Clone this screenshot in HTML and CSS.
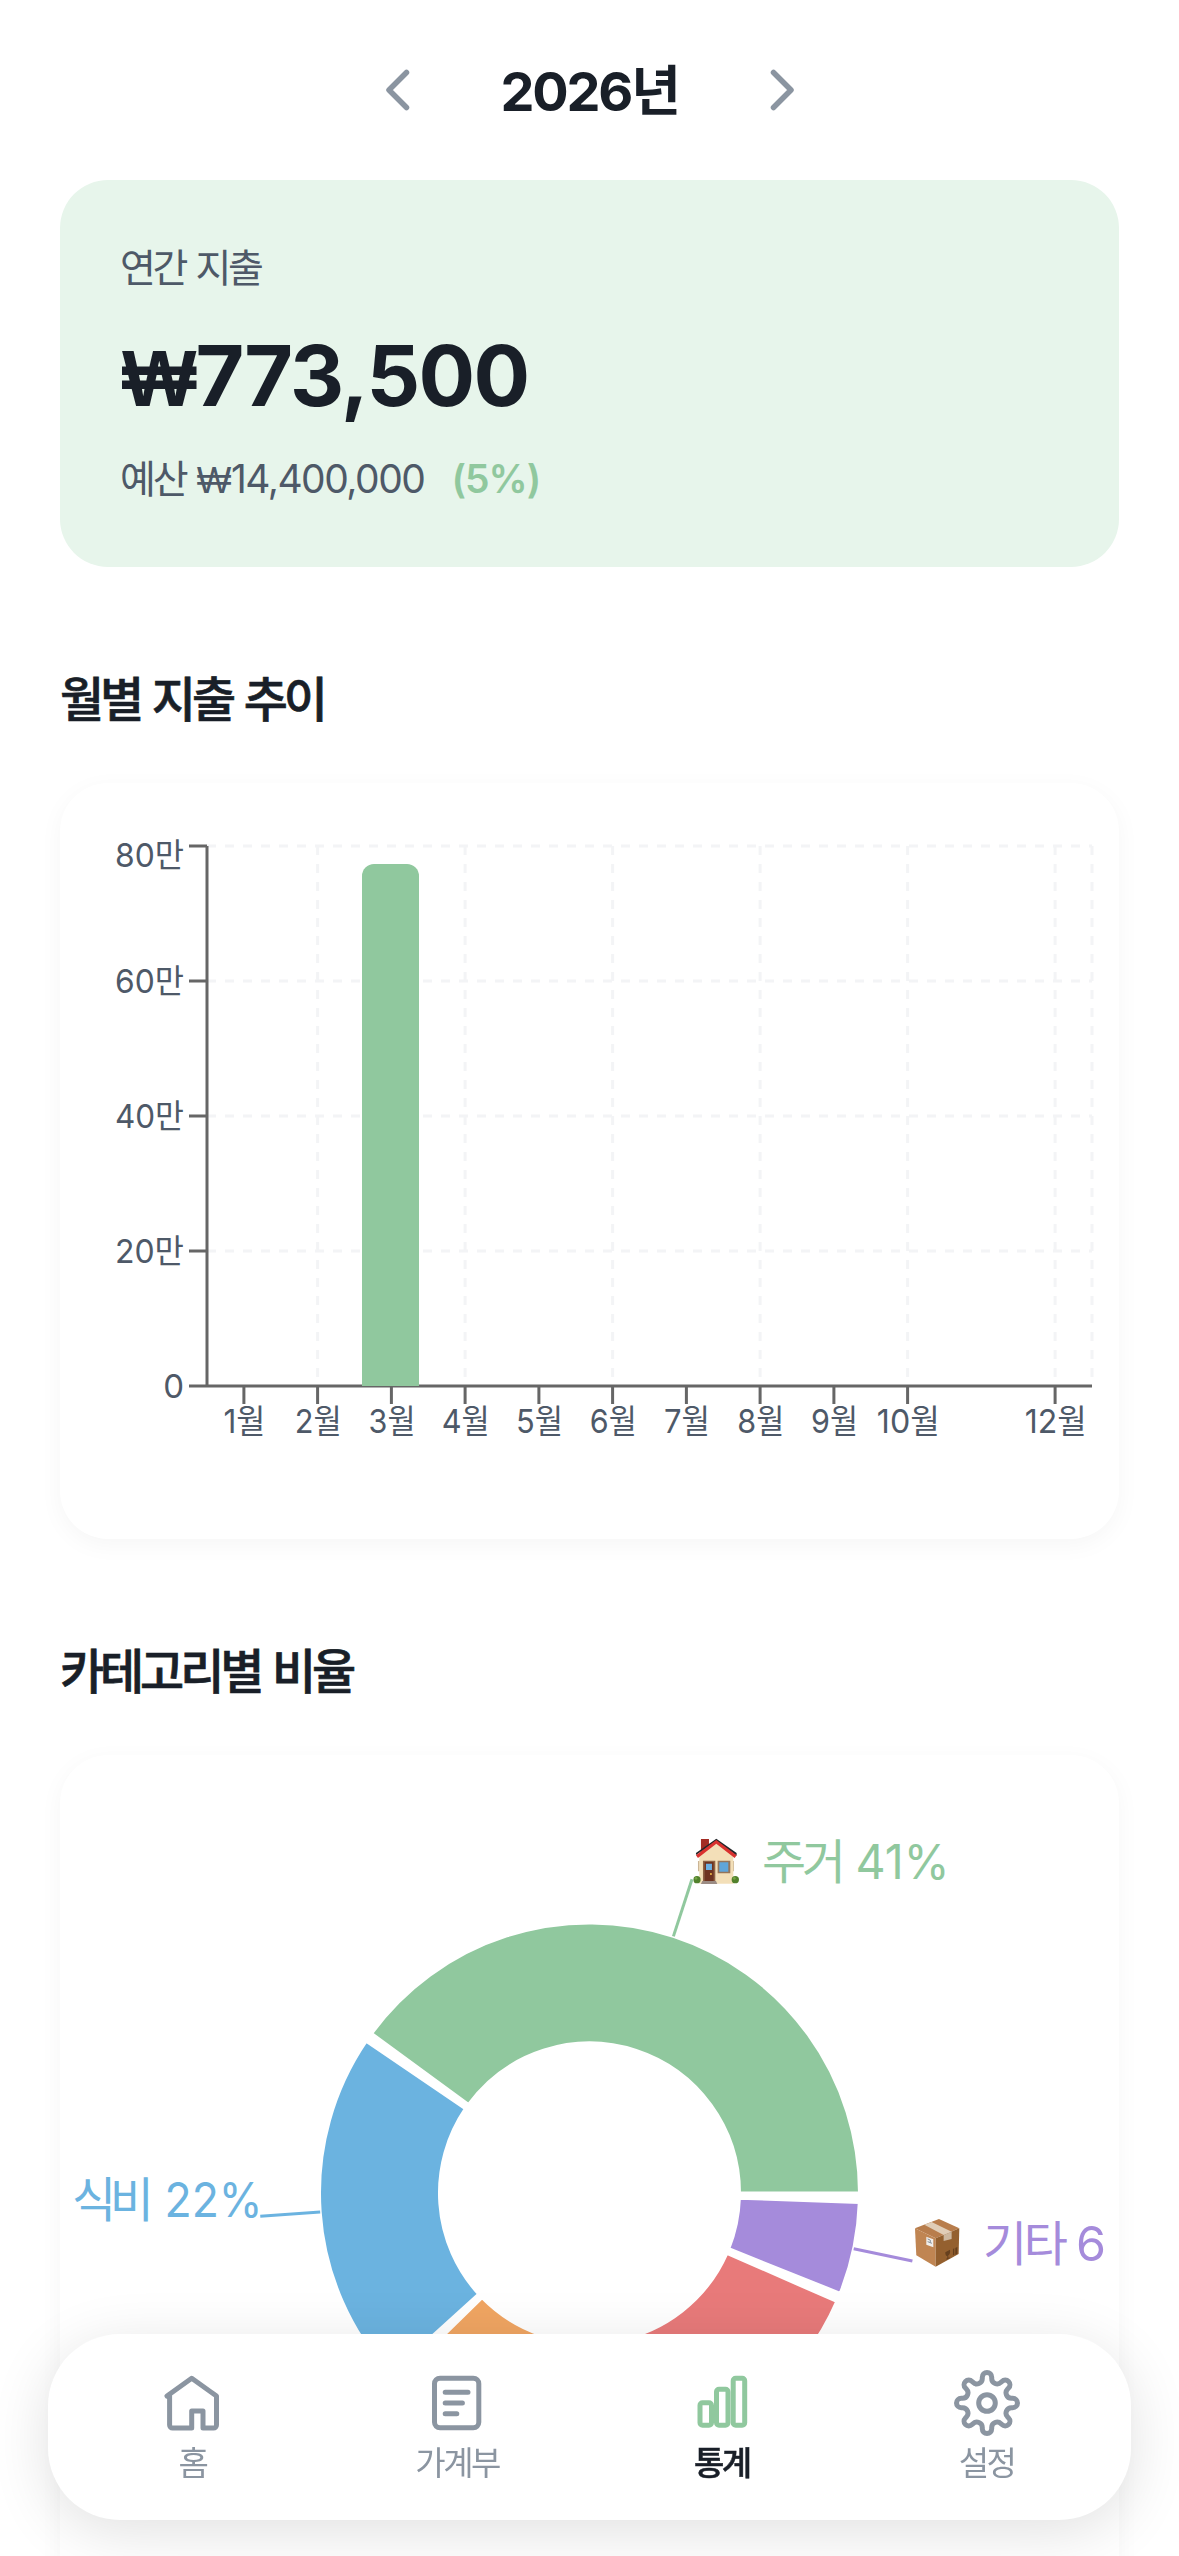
FILE: index.html
```html
<!DOCTYPE html>
<html lang="ko">
  <head>
    <meta charset="UTF-8" />
    <meta name="viewport" content="width=device-width, initial-scale=1.0" />
    <title>통계</title>
    <link rel="stylesheet" href="styles.css">
  </head>
  <body>
    <main class="page">
      <header class="year">
        <button class="year__btn" aria-label="이전">
          <svg width="72" height="72" viewBox="0 0 72 72"><path d="M44.5 18.5 27 36l17.5 17.5" /></svg>
        </button>
        <h1 class="year__title">2026년</h1>
        <button class="year__btn" aria-label="다음">
          <svg width="72" height="72" viewBox="0 0 72 72"><path d="M27.5 18.5 45 36 27.5 53.5" /></svg>
        </button>
      </header>

      <section class="summary">
        <p class="summary__label">연간 지출</p>
        <p class="summary__total"><span class="won">₩</span>773,500</p>
        <p class="summary__budget"><span class="summary__word">예산</span> <span class="won">₩</span>14,400,000<span class="percent">(5%)</span></p>
      </section>

      <h2 class="section-title">월별 지출 추이</h2>
      <section class="card">
        <svg class="chart" width="1035" height="660" viewBox="0 0 1035 660">
          <g class="grid">
            <path d="M135 15H1020M135 150H1020M135 285H1020M135 420H1020" />
            <path d="M245.6 15V555M393.1 15V555M540.6 15V555M688.1 15V555M835.6 15V555M983.1 15V555M1020 15V555" />
          </g>
          <g class="axis">
            <path d="M135 15V555M117 15H135M117 150H135M117 285H135M117 420H135M117 555H135" />
            <path d="M135 555H1020M171.9 555v18M245.6 555v18M319.4 555v18M393.1 555v18M466.9 555v18M540.6 555v18M614.4 555v18M688.1 555v18M761.9 555v18M835.6 555v18M983.1 555v18" />
          </g>
          <path class="bar" d="M290 555V45a12 12 0 0 1 12-12h33a12 12 0 0 1 12 12V555Z" />
          <g class="tick tick--y">
            <text x="112" y="36" textLength="69" lengthAdjust="spacingAndGlyphs">80만</text>
            <text x="112" y="162" textLength="69" lengthAdjust="spacingAndGlyphs">60만</text>
            <text x="112" y="297" textLength="69" lengthAdjust="spacingAndGlyphs">40만</text>
            <text x="112" y="432" textLength="69" lengthAdjust="spacingAndGlyphs">20만</text>
            <text x="112" y="567">0</text>
          </g>
          <g class="tick tick--x">
            <text x="172.4" y="602" textLength="42" lengthAdjust="spacingAndGlyphs">1월</text>
            <text x="246.3" y="602" textLength="47" lengthAdjust="spacingAndGlyphs">2월</text>
            <text x="320.1" y="602" textLength="47" lengthAdjust="spacingAndGlyphs">3월</text>
            <text x="393.8" y="602" textLength="48" lengthAdjust="spacingAndGlyphs">4월</text>
            <text x="467.6" y="602" textLength="47" lengthAdjust="spacingAndGlyphs">5월</text>
            <text x="541.3" y="602" textLength="47" lengthAdjust="spacingAndGlyphs">6월</text>
            <text x="615.1" y="602" textLength="46" lengthAdjust="spacingAndGlyphs">7월</text>
            <text x="688.8" y="602" textLength="47" lengthAdjust="spacingAndGlyphs">8월</text>
            <text x="762.6" y="602" textLength="47" lengthAdjust="spacingAndGlyphs">9월</text>
            <text x="836.3" y="602" textLength="63" lengthAdjust="spacingAndGlyphs">10월</text>
            <text x="983.8" y="602" textLength="62" lengthAdjust="spacingAndGlyphs">12월</text>
          </g>
        </svg>
      </section>

      <h2 class="section-title">카테고리별 비율</h2>
      <section class="card card--pie">
        <svg class="chart" width="1035" height="780" viewBox="0 0 1035 780">
          <g class="pie" transform="translate(517.5 390)">
            <path class="green" d="M270 0A270 270 0 0 0 -217.9 -159.5L-121 -88.6A150 150 0 0 1 150 0Z" />
            <path class="blue" d="M-223.3 -151.8A270 270 0 0 0 -199.7 181.7L-110.9 101A150 150 0 0 1 -124.1 -84.3Z" />
            <path class="orange" d="M-193.2 188.6A270 270 0 0 0 37.6 267.4L20.9 148.5A150 150 0 0 1 -107.4 104.8Z" />
            <path class="red" d="M46.9 265.9A270 270 0 0 0 247.2 108.5L137.4 60.3A150 150 0 0 1 26 147.7Z" />
            <path class="purple" d="M250.7 100.3A270 270 0 0 0 269.8 9.4L149.9 5.2A150 150 0 0 1 139.3 55.7Z" />
          </g>
          <g class="leader">
            <path class="green-line" d="M601.4 133.4 620 76.3" />
            <path class="blue-line" d="M248.2 409.1 188.3 413.3" />
            <path class="purple-line" d="M781.7 445.7 840.4 458" />
          </g>

          <!-- house -->
          <svg x="621.3" y="35.3" width="46" height="46" viewBox="100 85 138 138">
            <path fill="#a32c24" d="M123 87h24v28l-24 18z" />
            <path fill="#cbb595" d="M114 153h5v31h-5zM218 153h4v31h-4z" />
            <path fill="#f3dfb8" d="M118 135 169 93l51 42v86H118z" />
            <path fill="#23262a" d="M108 135v-6l61-43 61 43v8l-61-43z" />
            <path fill="#d9322f" d="M108 136 169 90l61 46-6 8-55-43-55 43z" />
            <path fill="#8d6244" d="M129 152h37v62h-37z" />
            <path fill="#6e3320" d="M134 156h27v57h-27z" />
            <path fill="#6bb0e2" d="M138 161h18v19h-18z" />
            <circle cx="153" cy="192" r="3" fill="#f2c048" />
            <path fill="#957459" d="M173 152h38v38h-38z" />
            <path fill="#5fa5da" d="M178 157h27v28h-27z" />
            <path fill="#9b8b83" d="M127 213h41l4 9h-49z" />
            <circle cx="111" cy="209" r="11" fill="#51812c" />
            <circle cx="226" cy="209" r="11" fill="#51812c" />
            <circle cx="108" cy="205" r="4" fill="#76a544" />
            <circle cx="223" cy="205" r="4" fill="#76a544" />
          </svg>

          <!-- package -->
          <svg x="841.3" y="415.3" width="50" height="50" viewBox="100 85 150 150">
            <path fill="#b87d4c" d="M105 115 177 87l61 28-71 30z" />
            <path fill="#c08552" d="M105 115l62 30v85l-58-34z" />
            <path fill="#94602f" d="M238 115l-71 30v85l69-38z" />
            <path fill="#e0cdb7" d="M133 104 155 96l60 29-24 10z" />
            <path fill="#cdb8a0" d="M191 135l24-10v22l-24 6z" />
            <path fill="#f1eeea" d="M139 140l21 8v24l-21-8z" />
            <path stroke="#85909a" stroke-width="3" d="M143 147l7 3M143 155l13 5M151 150v8" />
            <path fill="#66401e" d="M196 187l14-8q2 13-5 17v7l4-1v3l-10 4v-3l3-2v-6q-6 1-6-11zM219 177l4-2v19l-4 2zM226 174l6-3v20l-6 3z" />
          </svg>

          <g class="label">
            <text class="green" x="690" y="76" textLength="84">주거</text>
            <text class="green" x="783.5" y="76" textLength="94" lengthAdjust="spacingAndGlyphs">41%</text>
            <text class="blue" x="0" y="414" textLength="82">식비</text>
            <text class="blue" x="92.5" y="414" textLength="98" lengthAdjust="spacingAndGlyphs">22%</text>
            <text class="purple" x="911" y="458" textLength="85">기타</text>
            <text class="purple" x="1004" y="458" textLength="30" lengthAdjust="spacingAndGlyphs">6</text>
          </g>
        </svg>
      </section>
    </main>

    <nav class="nav">
      <a class="nav__item">
        <svg width="66" height="66" viewBox="0 0 66 66">
          <path d="M8 26 32.7 8.2 57.5 26v29a3 3 0 0 1-3 3H44V41H32.7v17H13.6a3 3 0 0 1-3-3V25" />
        </svg>
        <span>홈</span>
      </a>
      <a class="nav__item">
        <svg width="66" height="66" viewBox="0 0 66 66">
          <rect x="10.5" y="8.2" width="44.3" height="49.6" rx="5.5" />
          <path d="M21.2 22.3H44M21.2 33H38.4M21.2 43.8H32.8" />
        </svg>
        <span>가계부</span>
      </a>
      <a class="nav__item nav__item--active">
        <svg width="66" height="66" viewBox="0 0 66 66">
          <rect x="11" y="32.8" width="11.5" height="22.5" rx="2.5" />
          <rect x="27.5" y="19.3" width="11.5" height="36" rx="2.5" />
          <rect x="44.2" y="8.2" width="11.5" height="47.1" rx="2.5" />
        </svg>
        <span>통계</span>
      </a>
      <a class="nav__item">
        <svg width="66" height="66" viewBox="-33 -33 66 66">
          <circle r="8.3" />
          <path d="M-4.7 -24.5L-4.7 -25.8A4.7 4.7 0 0 1 4.7 -25.8L4.7 -24.5A5.45 5.45 0 0 0 14 -20.65L14.92 -21.57A4.7 4.7 0 0 1 21.57 -14.92L20.65 -14A5.45 5.45 0 0 0 24.5 -4.7L25.8 -4.7A4.7 4.7 0 0 1 25.8 4.7L24.5 4.7A5.45 5.45 0 0 0 20.65 14L21.57 14.92A4.7 4.7 0 0 1 14.92 21.57L14 20.65A5.45 5.45 0 0 0 4.7 24.5L4.7 25.8A4.7 4.7 0 0 1 -4.7 25.8L-4.7 24.5A5.45 5.45 0 0 0 -14 20.65L-14.92 21.57A4.7 4.7 0 0 1 -21.57 14.92L-20.65 14A5.45 5.45 0 0 0 -24.5 4.7L-25.8 4.7A4.7 4.7 0 0 1 -25.8 -4.7L-24.5 -4.7A5.45 5.45 0 0 0 -20.65 -14L-21.57 -14.92A4.7 4.7 0 0 1 -14.92 -21.57L-14 -20.65A5.45 5.45 0 0 0 -4.7 -24.5Z" />
        </svg>
        <span>설정</span>
      </a>
    </nav>
  </body>
</html>
```
FILE: styles.css
```css
* {
  box-sizing: border-box;
}
body {
  margin: 0;
  background-color: #fff;
  color: #191f28;
  font-family: Inter, "Noto Sans CJK KR", sans-serif;
}
h1,
h2,
p {
  margin: 0;
}
.page {
  height: 2556px;
  padding: 0 60px;
  overflow: hidden;
}

.year {
  display: flex;
  align-items: center;
  justify-content: center;
  gap: 69px;
  height: 180px;
}
.year__btn {
  display: flex;
  padding: 0;
  border: none;
  background: none;
}
.year__btn path {
  fill: none;
  stroke: #8b95a1;
  stroke-width: 5.5;
  stroke-linecap: round;
  stroke-linejoin: round;
}
.year__title {
  width: 174px;
  padding-top: 3px;
  font-size: 54px;
  line-height: 72px;
  font-weight: 700;
  letter-spacing: -2.2px;
  text-indent: -2px;
  white-space: nowrap;
}

.summary {
  height: 387px;
  padding: 61px 60px 0;
  border-radius: 48px;
  background-color: #e7f5eb;
  white-space: nowrap;
}
.won {
  display: inline-block;
  width: 0.93em;
  font-family: "Liberation Sans", sans-serif;
  font-size: 0.94em;
  line-height: 1;
}
.summary__label {
  height: 54px;
  color: #4e5968;
  font-size: 39px;
  line-height: 54px;
  letter-spacing: -3.4px;
  word-spacing: 3px;
}
.summary__total {
  height: 112px;
  margin-top: 25px;
  padding-left: 2px;
  font-size: 84px;
  font-weight: 700;
  line-height: 112px;
  letter-spacing: -1.7px;
}
.summary__budget {
  height: 54px;
  margin-top: 20px;
  color: #4e5968;
  font-size: 39px;
  line-height: 54px;
  letter-spacing: -1.5px;
  word-spacing: 2px;
}
.summary__word {
  letter-spacing: -3.2px;
}
.percent {
  margin-left: 27px;
  color: #90c89e;
  font-weight: 600;
  letter-spacing: -1px;
}

.section-title {
  margin: 97px 0 47px;
  font-size: 48px;
  font-weight: 500;
  line-height: 72px;
  letter-spacing: -4.1px;
  word-spacing: 3px;
  white-space: nowrap;
  -webkit-text-stroke: 0.7px #191f28;
}
.card {
  height: 756px;
  padding: 48px 12px;
  border-radius: 48px;
  background-color: #fff;
  box-shadow: 0 6px 24px rgba(0, 0, 0, 0.04);
}
.card--pie {
  height: 1200px;
}
.chart {
  display: block;
}
.grid path {
  fill: none;
  stroke: #f3f4f6;
  stroke-width: 3;
  stroke-dasharray: 9 9;
}
.axis path {
  fill: none;
  stroke: #666;
  stroke-width: 3;
}
.bar {
  fill: #90c89e;
}
.tick {
  fill: #4e5968;
  font-size: 33px;
}
.tick--y {
  text-anchor: end;
}
.tick--x {
  text-anchor: middle;
}

.pie path {
  stroke: #fff;
  stroke-width: 3;
}
.green {
  fill: #90c89e;
}
.blue {
  fill: #6bb3e0;
}
.orange {
  fill: #f0a562;
}
.red {
  fill: #e87a7a;
}
.purple {
  fill: #a58bdb;
}
.leader path {
  fill: none;
  stroke-width: 3;
}
.leader .green-line {
  stroke: #90c89e;
}
.leader .blue-line {
  stroke: #6bb3e0;
}
.leader .purple-line {
  stroke: #a58bdb;
}
.label {
  font-size: 48px;
}

.nav {
  position: fixed;
  left: 48px;
  right: 48px;
  bottom: 36px;
  display: flex;
  height: 186px;
  padding: 36px 12px 0;
  border-radius: 72px;
  background-color: #fff;
  box-shadow: 0 12px 60px rgba(0, 0, 0, 0.12);
}
.nav__item {
  flex: 1;
  display: flex;
  flex-direction: column;
  align-items: center;
  gap: 7px;
  color: #8b95a1;
  font-size: 33px;
  line-height: 40px;
  letter-spacing: -2.5px;
}
.nav__item svg {
  fill: none;
  stroke: #8b95a1;
  stroke-width: 5;
  stroke-linecap: round;
  stroke-linejoin: round;
}
.nav__item--active {
  color: #191f28;
  font-weight: 500;
  -webkit-text-stroke: 0.5px #191f28;
}
.nav__item--active svg {
  stroke: #90c89e;
}
```
